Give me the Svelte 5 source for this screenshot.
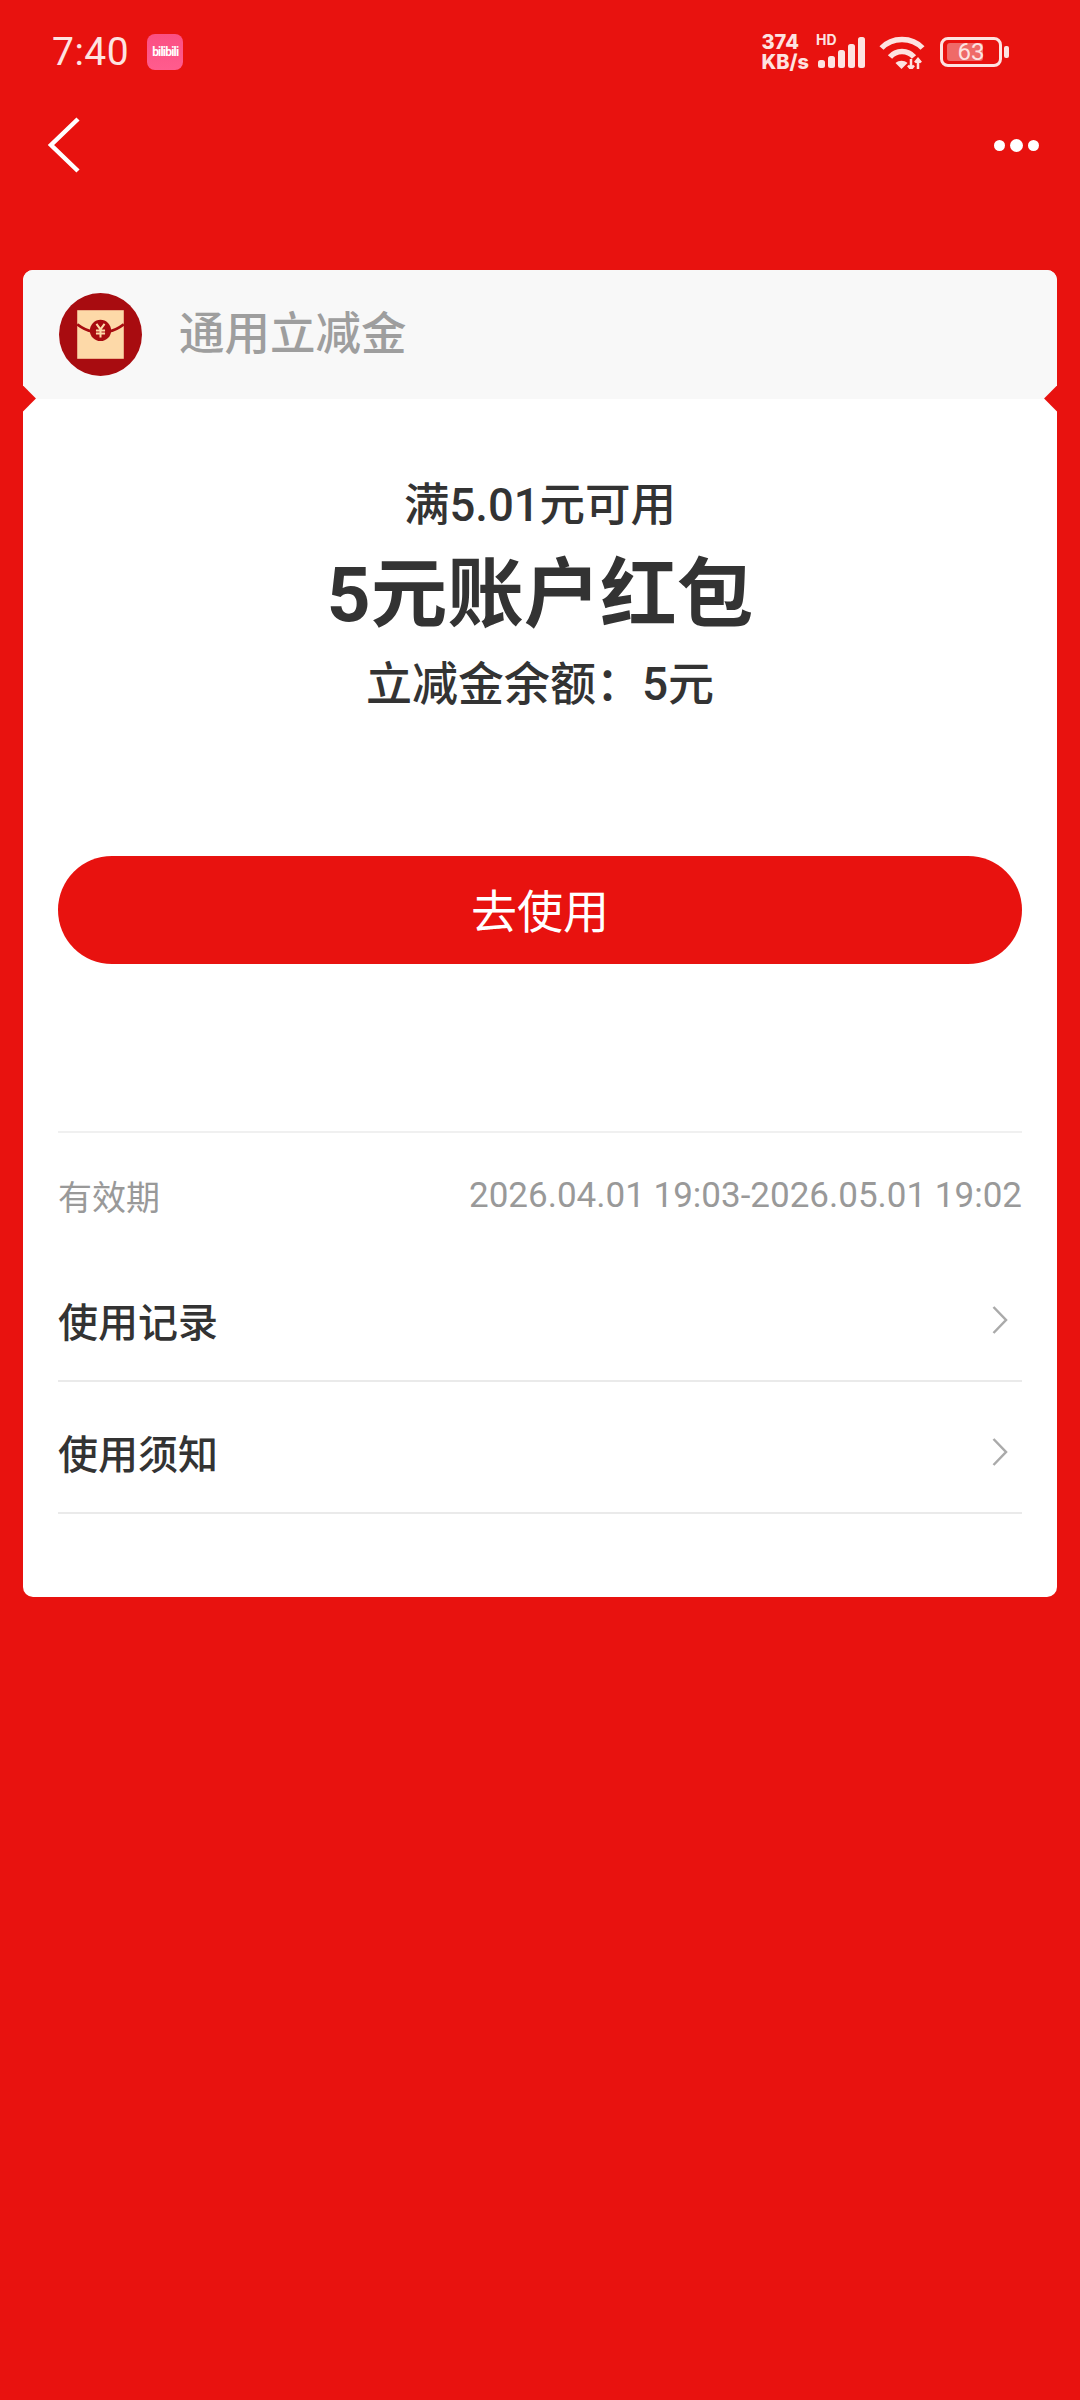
<script>
  const rows = ["使用记录", "使用须知"];
  const bars = [
    { x: 0, top: 23 },
    { x: 10, top: 19 },
    { x: 20, top: 13 },
    { x: 30, top: 7 },
    { x: 40, top: 0 },
  ];
</script>

<div class="page">
  <div class="status">
    <div class="status-left">
      <span class="time">7:40</span>
      <div class="bili">bilibili</div>
    </div>
    <div class="status-right">
      <div class="speed"><span>374</span><span>KB/s</span></div>
      <div class="signal">
        <span class="hd">HD</span>
        <svg width="48" height="31" viewBox="0 0 48 31" fill="#fde3e1">
          {#each bars as bar}
            <rect x={bar.x} y={bar.top} width="7" height={31 - bar.top} rx="2.500" />
          {/each}
        </svg>
      </div>
      <svg class="wifi" width="46" height="34" viewBox="0 0 46 34" fill="none" stroke="#fde3e1" stroke-width="5.500">
        <path d="M2.500 13 C13 1.500 33 1.500 43.500 13" />
        <path d="M11 22 C17 14.500 29 14.500 35 22" />
        <path d="M16.500 28 C20 25 25 25 28.500 28 L22.500 34 Z" fill="#fde3e1" stroke="none" />
        <path d="M32 24 V34 M29 30.500 L32 34 L35 30.500 M39 34 V24 M36 27.500 L39 24 L42 27.500" stroke-width="2.500" />
      </svg>
      <div class="battery">
        <div class="battery-body">
          <div class="battery-fill"></div>
          <span>63</span>
        </div>
        <div class="battery-cap"></div>
      </div>
    </div>
  </div>

  <div class="nav">
    <svg width="34" height="56" viewBox="0 0 34 56" fill="none" stroke="#fff" stroke-width="4.500">
      <path d="M31 2 L4 28 L31 54" />
    </svg>
    <div class="dots"><i></i><i class="mid"></i><i></i></div>
  </div>

  <div class="card">
    <div class="card-head">
      <svg width="83" height="83" viewBox="0 0 82 82">
        <circle cx="41" cy="41" r="41" fill="#a80c10" />
        <rect x="18" y="17" width="46" height="48" fill="#fdd9a8" />
        <path d="M18 31 Q26 37 33 38 M64 31 Q56 37 49 38" fill="none" stroke="#a80c10" stroke-width="2.500" />
        <circle cx="41" cy="37" r="10.500" fill="#a80c10" />
        <path d="M37 30.500 L41 36 L45 30.500 M41 36 V44 M36.500 37 H45.500 M36.500 40 H45.500" fill="none" stroke="#fdd9a8" stroke-width="2" />
      </svg>
      <span>通用立减金</span>
    </div>
    <i class="notch left"></i>
    <i class="notch right"></i>

    <div class="card-body">
      <div class="condition">满5.01元可用</div>
      <div class="title">5元账户红包</div>
      <div class="balance">立减金余额：5元</div>
      <button>去使用</button>

      <div class="validity">
        <span class="label">有效期</span>
        <span>2026.04.01 19:03-2026.05.01 19:02</span>
      </div>

      {#each rows as row}
        <div class="row">
          <span>{row}</span>
          <svg width="16" height="28" viewBox="0 0 16 28" fill="none" stroke="#aaa" stroke-width="2.500">
            <path d="M1.500 1 L14 14 L1.500 27" />
          </svg>
        </div>
      {/each}
    </div>
  </div>
</div>

<style>
  :global(body) {
    margin: 0;
    background: #e8120f;
  }
  .page {
    height: 2400px;
    background: #e8120f;
    font-family: Roboto, "Noto Sans CJK SC", sans-serif;
    overflow: hidden;
  }
  .status {
    height: 100px;
    padding: 30px 71px 0 52px;
    box-sizing: border-box;
    display: flex;
    justify-content: space-between;
    align-items: flex-start;
  }
  .status-left {
    display: flex;
    align-items: center;
    gap: 18px;
  }
  .time {
    font-size: 39px;
    line-height: 44px;
    color: #fde3e1;
    letter-spacing: 0.500px;
  }
  .bili {
    width: 36px;
    height: 36px;
    border-radius: 8px;
    background: linear-gradient(#fb4f83, #ff5c8e);
    color: #fff;
    font-size: 12px;
    font-weight: 700;
    letter-spacing: -0.800px;
    line-height: 36px;
    text-align: center;
    overflow: hidden;
  }
  .status-right {
    display: flex;
    align-items: center;
    height: 44px;
  }
  .speed {
    display: flex;
    flex-direction: column;
    font-family: Inter, sans-serif;
    font-size: 20px;
    font-weight: 800;
    line-height: 20px;
    color: #fde3e1;
  }
  .signal {
    position: relative;
    margin-left: 9px;
    padding-top: 1px;
    display: flex;
  }
  .hd {
    position: absolute;
    left: -2px;
    top: -5px;
    font-family: Inter, sans-serif;
    font-size: 14px;
    line-height: 17px;
    font-weight: 700;
    color: #fde3e1;
  }
  .wifi {
    margin-left: 13px;
  }
  .battery {
    display: flex;
    align-items: center;
    gap: 2px;
    margin-left: 15px;
  }
  .battery-body {
    position: relative;
    width: 62px;
    height: 30px;
    box-sizing: border-box;
    border: 3px solid #fde3e1;
    border-radius: 8px;
    display: flex;
    align-items: center;
    justify-content: center;
  }
  .battery-fill {
    position: absolute;
    left: 4px;
    top: 3px;
    bottom: 3px;
    width: 36px;
    border-radius: 3px;
    background: #ef6a68;
  }
  .battery-body span {
    position: relative;
    font-size: 24px;
    color: #fde3e1;
  }
  .battery-cap {
    width: 5px;
    height: 12px;
    border-radius: 2px;
    background: #fde3e1;
  }
  .nav {
    height: 90px;
    padding: 0 41px 0 47px;
    display: flex;
    justify-content: space-between;
    align-items: center;
  }
  .dots {
    display: flex;
    align-items: center;
    gap: 5px;
  }
  .dots i {
    width: 11px;
    height: 11px;
    border-radius: 50%;
    background: #fff;
  }
  .dots i.mid {
    width: 13px;
    height: 13px;
  }
  .card {
    position: relative;
    margin: 80px 23px 0;
    height: 1327px;
    background: #fff;
    border-radius: 10px;
    overflow: hidden;
  }
  .card-head {
    height: 129px;
    background: #f8f8f8;
    padding-left: 36px;
    display: flex;
    align-items: center;
    gap: 37px;
    box-sizing: border-box;
  }
  .card-head span {
    font-size: 45.500px;
    line-height: 56px;
    color: #9e9e9e;
    font-weight: 500;
  }
  .notch {
    position: absolute;
    top: 119px;
    width: 19px;
    height: 19px;
    background: #e8120f;
    transform: rotate(45deg);
  }
  .notch.left {
    left: -10px;
  }
  .notch.right {
    right: -10px;
  }
  .card-body {
    padding: 79px 35px 0;
    display: flex;
    flex-direction: column;
    text-align: center;
  }
  .condition {
    font-size: 45.500px;
    line-height: 56px;
    font-weight: 500;
    color: #333;
  }
  .title {
    margin-top: 16px;
    font-size: 76.500px;
    line-height: 90px;
    font-weight: 700;
    color: #333;
  }
  .balance {
    margin-top: 16px;
    font-size: 46px;
    line-height: 56px;
    font-weight: 500;
    color: #333;
  }
  button {
    margin-top: 144px;
    height: 108px;
    border: none;
    border-radius: 54px;
    background: #e8120f;
    color: #fff;
    font-family: inherit;
    font-size: 46px;
    padding: 0 0 5px;
  }
  .validity {
    margin-top: 167px;
    height: 119px;
    padding-top: 8px;
    border-top: 2px solid #f0f0f0;
    box-sizing: border-box;
    display: flex;
    justify-content: space-between;
    align-items: center;
    font-size: 35px;
    color: #999;
  }
  .label {
    font-size: 34px;
  }
  .row {
    height: 132px;
    padding: 10px 14px 0 0;
    border-bottom: 2px solid #eaeaea;
    box-sizing: border-box;
    display: flex;
    justify-content: space-between;
    align-items: center;
    font-size: 40px;
    font-weight: 500;
    color: #333;
  }
</style>
